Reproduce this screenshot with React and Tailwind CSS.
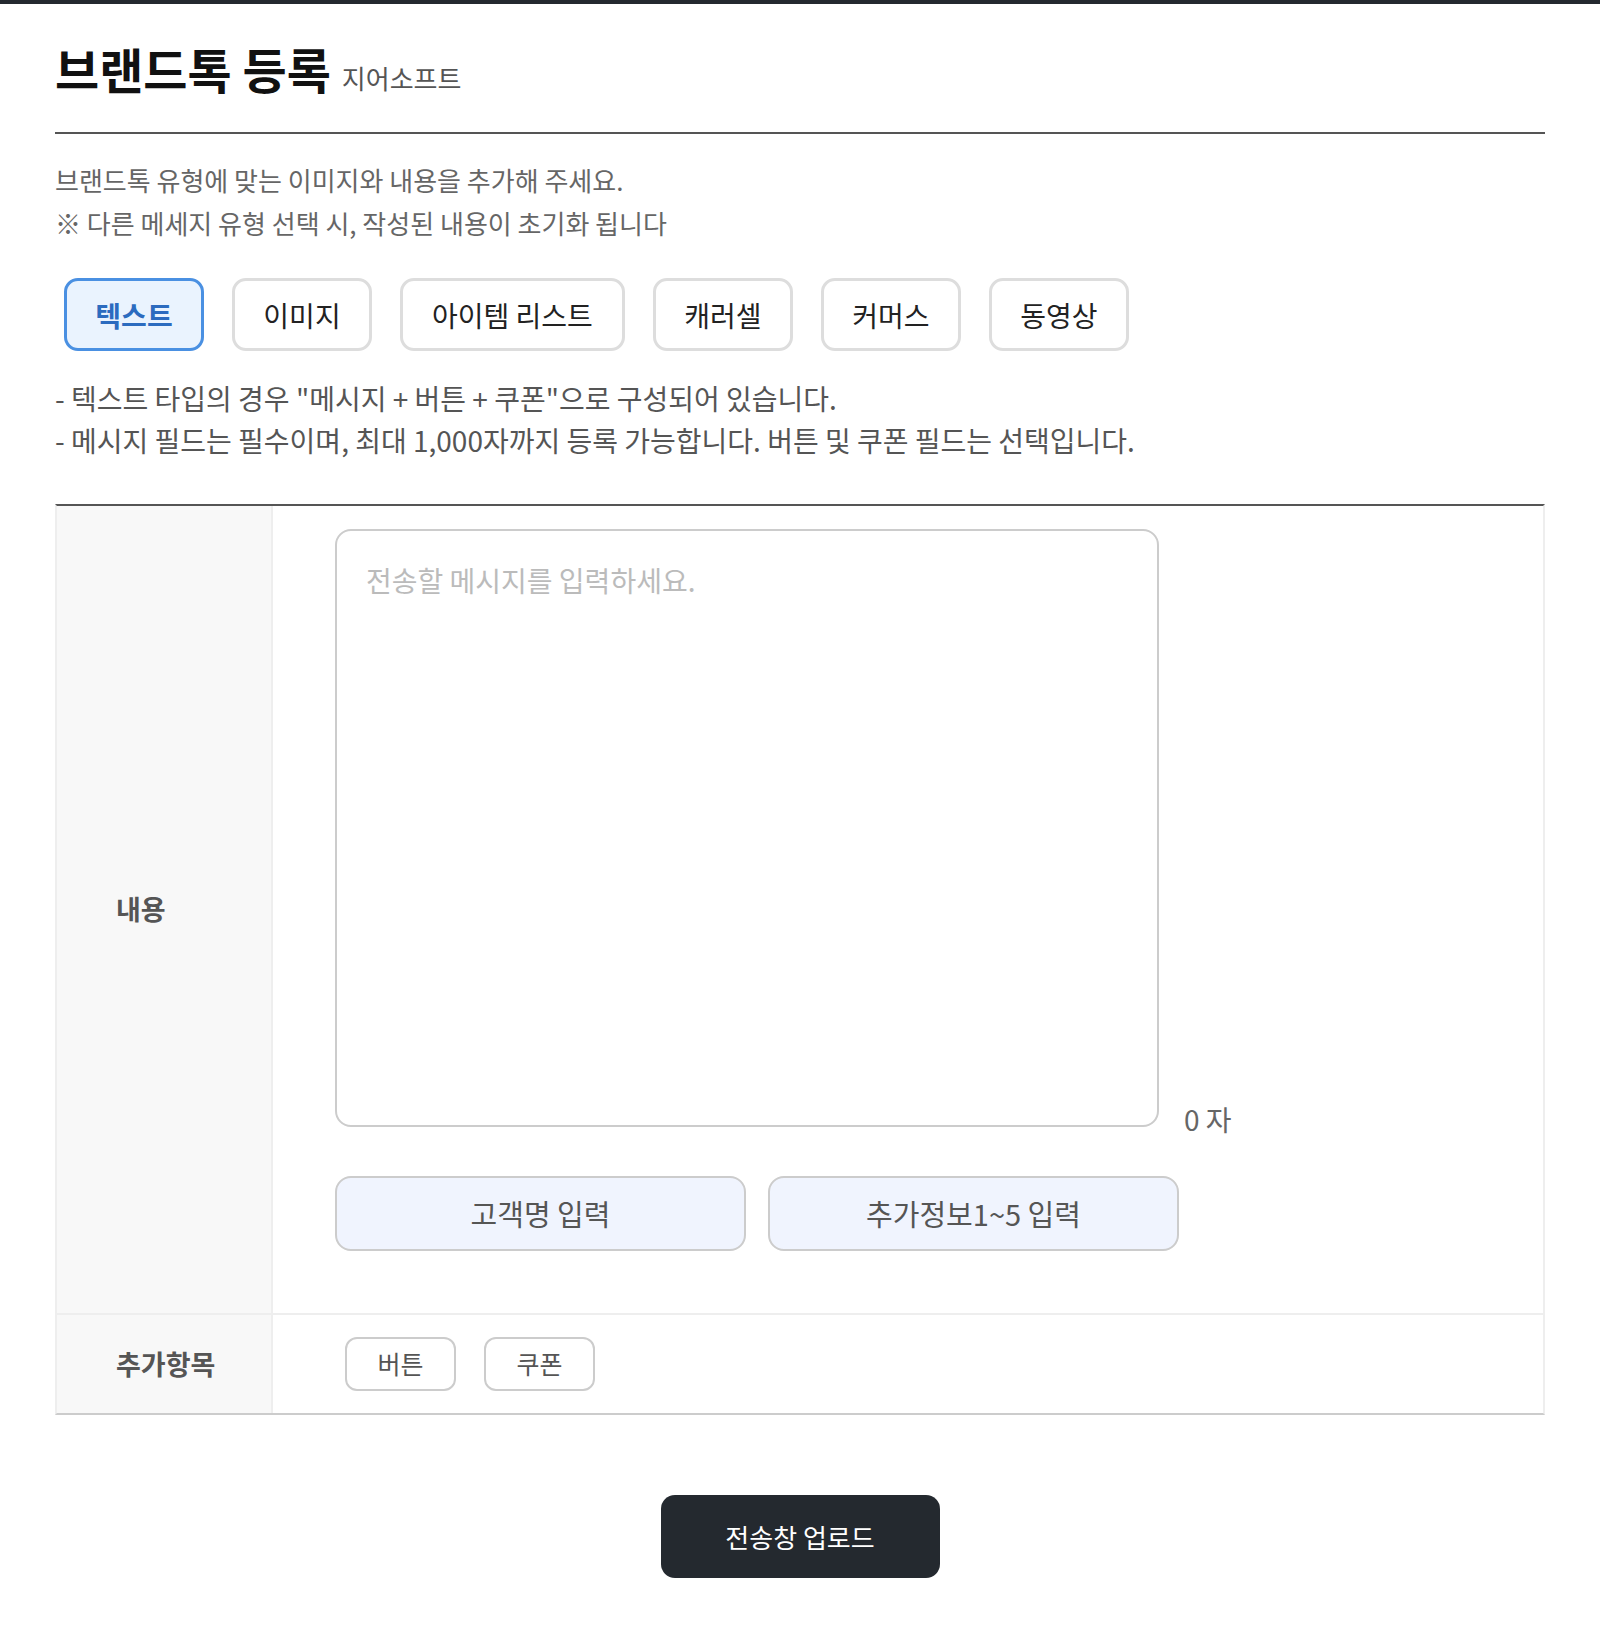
import React, { useState } from 'react';

const TABS = ['텍스트', '이미지', '아이템 리스트', '캐러셀', '커머스', '동영상'];

const App = () => {
    const [tab, setTab] = useState('텍스트');
    const [message, setMessage] = useState('');

    return (
        <div className="min-h-screen bg-white font-['Noto_Sans_CJK_KR','Noto_Sans',sans-serif] text-[#222]">
            <div className="h-1 bg-[#24292f]" />

            <div className="px-[55px] pb-[67px]">
                {/* 헤더 */}
                <header className="flex items-baseline gap-[11px] pt-[40px] pb-[40px] border-b-2 border-[#555]">
                    <h1 className="text-[48px] leading-none font-bold text-[#111]">브랜드톡 등록</h1>
                    <span className="text-[26px] leading-none text-[#555]">지어소프트</span>
                </header>

                <div className="mt-[24px] text-[26px] leading-[43px] text-[#666]">
                    <p>브랜드톡 유형에 맞는 이미지와 내용을 추가해 주세요.</p>
                    <p>※ 다른 메세지 유형 선택 시, 작성된 내용이 초기화 됩니다</p>
                </div>

                {/* 유형 탭 */}
                <div className="mt-[34px] ml-[9px] flex gap-[28px]">
                    {TABS.map(name => (
                        <button
                            key={name}
                            onClick={() => setTab(name)}
                            className={clsxTab(tab === name, name.length > 3)}
                        >
                            {name}
                        </button>
                    ))}
                </div>

                <div className="mt-[26px] text-[28px] leading-[42px] text-[#555]">
                    <p>- 텍스트 타입의 경우 "메시지 + 버튼 + 쿠폰"으로 구성되어 있습니다.</p>
                    <p>- 메시지 필드는 필수이며, 최대 1,000자까지 등록 가능합니다. 버튼 및 쿠폰 필드는 선택입니다.</p>
                </div>

                {/* 입력 테이블 */}
                <div className="mt-[43px] border-t-2 border-[#555] border-x-2 border-x-[#eeeeee] border-b-2 border-b-[#cccccc]">
                    <div className="flex border-b-2 border-[#eeeeee]">
                        <div className="w-[216px] shrink-0 bg-[#f8f8f8] border-r-2 border-[#eeeeee] flex items-center pl-[59px]">
                            <span className="text-[27px] font-bold text-[#555]">내용</span>
                        </div>
                        <div className="flex-1 pl-[62px] pt-[23px] pb-[62px]">
                            <div className="flex items-end gap-[25px]">
                                <textarea
                                    value={message}
                                    onChange={e => setMessage(e.target.value)}
                                    placeholder="전송할 메시지를 입력하세요."
                                    className="w-[824px] h-[598px] resize-none rounded-[16px] border-2 border-[#cccccc] px-[29px] py-[30px] text-[28px] leading-[38px] text-[#333] placeholder:text-[#bbbbbb] outline-none"
                                />
                                <span className="text-[28px] leading-none text-[#666] mb-[-6px]">{message.length} 자</span>
                            </div>
                            <div className="mt-[49px] flex gap-[22px]">
                                <button className="w-[411px] h-[75px] rounded-[16px] border-2 border-[#cccccc] bg-[#f0f4fe] text-[29px] text-[#555]">
                                    고객명 입력
                                </button>
                                <button className="w-[411px] h-[75px] rounded-[16px] border-2 border-[#cccccc] bg-[#f0f4fe] text-[29px] text-[#555]">
                                    추가정보1~5 입력
                                </button>
                            </div>
                        </div>
                    </div>

                    <div className="flex">
                        <div className="w-[216px] shrink-0 bg-[#f8f8f8] border-r-2 border-[#eeeeee] flex items-center pl-[59px]">
                            <span className="text-[27px] font-bold text-[#555]">추가항목</span>
                        </div>
                        <div className="flex-1 h-[98px] pl-[72px] flex items-center gap-[28px]">
                            <button className="w-[111px] h-[54px] rounded-[12px] border-2 border-[#cccccc] bg-white text-[25px] text-[#555]">
                                버튼
                            </button>
                            <button className="w-[111px] h-[54px] rounded-[12px] border-2 border-[#cccccc] bg-white text-[25px] text-[#555]">
                                쿠폰
                            </button>
                        </div>
                    </div>
                </div>

                <div className="mt-[80px] flex justify-center">
                    <button className="w-[279px] h-[83px] rounded-[14px] bg-[#24292f] text-[26px] text-white">
                        전송창 업로드
                    </button>
                </div>
            </div>
        </div>
    );
};

// 탭 버튼 스타일
function clsxTab(active, wide) {
    const size = wide ? 'px-[29px]' : 'w-[140px]';
    const look = active
        ? 'border-[#4a90e2] bg-[#eaf3fe] font-bold text-[#2c6bbf]'
        : 'border-[#dddddd] bg-white text-[#222]';
    return `h-[73px] shrink-0 rounded-[14px] border-[3px] text-[28px] ${size} ${look}`;
}

export default App;
